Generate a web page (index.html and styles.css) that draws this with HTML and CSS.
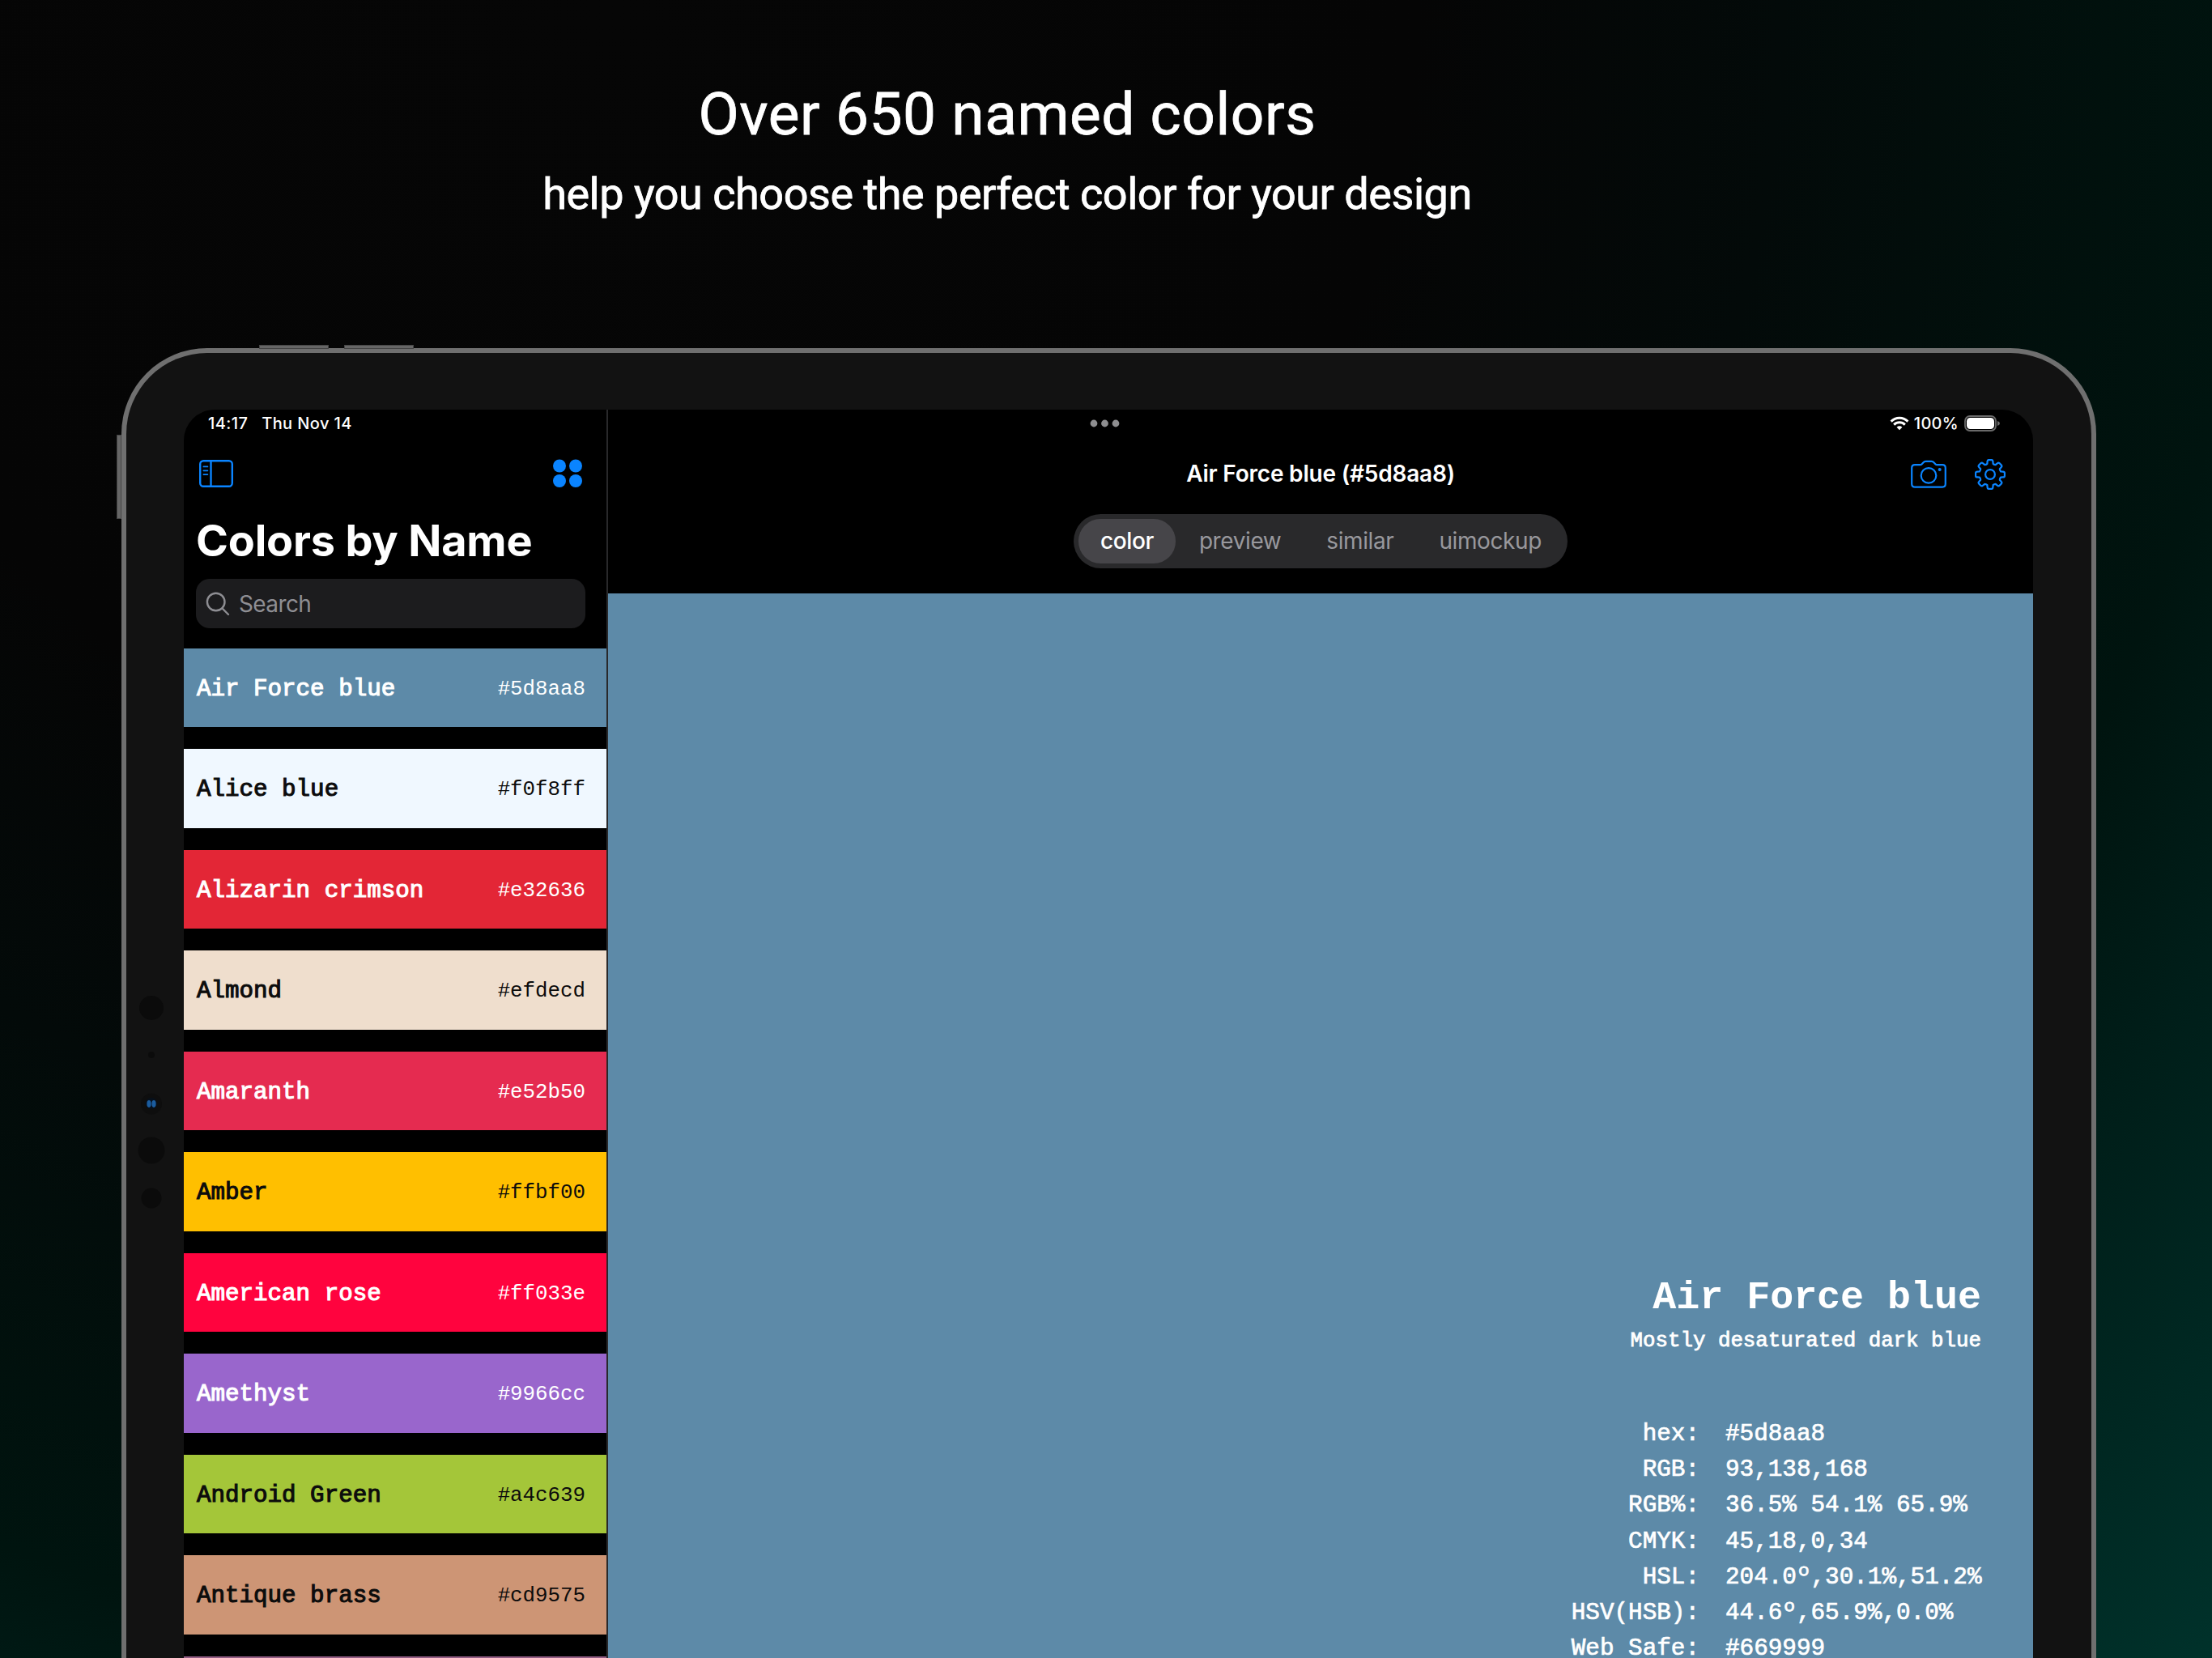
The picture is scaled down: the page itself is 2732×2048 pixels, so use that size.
FILE: index.html
```html
<!DOCTYPE html>
<html lang="en">
<head>
  <meta charset="UTF-8" />
  <title>Colors by Name</title>
  <link rel="stylesheet" href="styles.css">
</head>
<body>
  <div class="headline">
    <h1>Over 650 named colors</h1>
    <p>help you choose the perfect color for your design</p>
  </div>

  <div class="device">
    <span class="hw hw-top1"></span>
    <span class="hw hw-top2"></span>
    <span class="hw hw-side"></span>
    <svg class="sensors" width="40" height="280" viewBox="0 0 40 280">
      <g fill="#0b0b0b">
        <circle cx="20" cy="15" r="15" />
        <circle cx="20" cy="73" r="4" />
        <circle cx="20" cy="133.5" r="13" fill="#0e0e0e" />
        <circle cx="20" cy="191" r="16.5" />
        <circle cx="20" cy="250" r="12.5" />
      </g>
      <circle cx="20" cy="133" r="7" fill="#06101c" />
      <ellipse cx="17" cy="133.5" rx="2.6" ry="4.4" fill="#1b5c9e" />
      <ellipse cx="23" cy="133.5" rx="2.6" ry="4.4" fill="#1b5c9e" />
    </svg>

    <div class="screen">
      <div class="sidebar">
        <div class="status"><span>14:17</span><span>Thu Nov 14</span></div>
        <div class="side-tools">
          <svg width="44" height="36" viewBox="0 0 44 36" fill="none" stroke="#0a84ff" stroke-width="2.4">
            <rect x="2.2" y="2.2" width="39.6" height="31.6" rx="4" />
            <path d="M15.5 2.500v31" />
            <path d="M6.4 9.4h5M6.4 14.3h5M6.4 19.1h5" stroke-width="1.8" stroke-linecap="round" />
          </svg>
          <svg width="36" height="36" viewBox="0 0 36 36" fill="#0a84ff">
            <circle cx="8" cy="8.5" r="8" /><circle cx="28" cy="8.5" r="8" />
            <circle cx="8" cy="27" r="8" /><circle cx="28" cy="27" r="8" />
          </svg>
        </div>
        <h2>Colors by Name</h2>
        <div class="search">
          <svg width="30" height="30" viewBox="0 0 30 30" fill="none" stroke="#8e8e93" stroke-width="2.4" stroke-linecap="round">
            <circle cx="12.7" cy="12.5" r="10.8" />
            <path d="M20.6 20.5l7.4 7.5" />
          </svg>
          <span>Search</span>
        </div>
        <div class="list">
          <div class="row air"><b>Air Force blue</b><span>#5d8aa8</span></div>
          <div class="row alice dark"><b>Alice blue</b><span>#f0f8ff</span></div>
          <div class="row alizarin"><b>Alizarin crimson</b><span>#e32636</span></div>
          <div class="row almond dark"><b>Almond</b><span>#efdecd</span></div>
          <div class="row amaranth"><b>Amaranth</b><span>#e52b50</span></div>
          <div class="row amber dark"><b>Amber</b><span>#ffbf00</span></div>
          <div class="row rose"><b>American rose</b><span>#ff033e</span></div>
          <div class="row amethyst"><b>Amethyst</b><span>#9966cc</span></div>
          <div class="row android dark"><b>Android Green</b><span>#a4c639</span></div>
          <div class="row brass dark"><b>Antique brass</b><span>#cd9575</span></div>
          <div class="row fuchsia"></div>
        </div>
      </div>

      <div class="main">
        <div class="status-right">
          <svg class="dots" width="38" height="10" viewBox="0 0 38 10" fill="#8e8e90">
            <circle cx="5" cy="5" r="4.4" /><circle cx="18.5" cy="5" r="4.4" /><circle cx="32" cy="5" r="4.4" />
          </svg>
          <svg width="24" height="18" viewBox="0 0 24 18" fill="none" stroke="#fff" stroke-width="3">
            <path d="M1.6 6.6a14.8 14.8 0 0 1 20.8 0" />
            <path d="M5.2 10.6a9.6 9.6 0 0 1 13.6 0" />
            <path d="M12 17.2l-3.4-3.5a4.8 4.8 0 0 1 6.8 0z" fill="#fff" stroke="none" />
          </svg>
          <span class="percent">100%</span>
          <svg width="45" height="20" viewBox="0 0 45 20">
            <rect x="1" y="1" width="38" height="18" rx="6" fill="none" stroke="#6a6a6a" stroke-width="1.8" />
            <rect x="3" y="3" width="34" height="14" rx="4.4" fill="#fff" />
            <path d="M41 7v6q3-1 3-3t-3-3z" fill="#6a6a6a" />
          </svg>
        </div>
        <div class="nav">
          <h3>Air Force blue (#5d8aa8)</h3>
          <div class="nav-icons">
            <svg width="44" height="36" viewBox="0 0 44 36" fill="none" stroke="#0a84ff" stroke-width="2.2" stroke-linejoin="round">
              <path d="M5 6.2h6.5q1.3 0 2.2-1l1.8-2q1.2-1.4 3-1.4h7q1.8 0 3 1.4l1.8 2q.9 1 2.2 1H39q3.8 0 3.8 3.8v19.8q0 3.8-3.8 3.8H5q-3.8 0-3.8-3.8V10Q1.2 6.2 5 6.2z" />
              <circle cx="22" cy="19.4" r="9.3" />
              <circle cx="35.7" cy="12" r="2" fill="#0a84ff" stroke="none" />
            </svg>
            <svg id="gear" width="40" height="40" viewBox="-20 -20 40 40" fill="none" stroke="#0a84ff" stroke-width="2.2" stroke-linejoin="round">
              <path />
              <circle r="5.9" />
            </svg>
          </div>
        </div>
        <div class="tabs">
          <span class="tab active">color</span>
          <span class="tab">preview</span>
          <span class="tab">similar</span>
          <span class="tab">uimockup</span>
        </div>
        <div class="swatch">
          <h4>Air Force blue</h4>
          <p>Mostly desaturated dark blue</p>
          <dl>
            <dt>hex:</dt><dd>#5d8aa8</dd>
            <dt>RGB:</dt><dd>93,138,168</dd>
            <dt>RGB%:</dt><dd>36.5% 54.1% 65.9%</dd>
            <dt>CMYK:</dt><dd>45,18,0,34</dd>
            <dt>HSL:</dt><dd>204.0º,30.1%,51.2%</dd>
            <dt>HSV(HSB):</dt><dd>44.6º,65.9%,0.0%</dd>
            <dt>Web Safe:</dt><dd>#669999</dd>
          </dl>
        </div>
      </div>
    </div>
  </div>

  <script>
    // eight-tooth gear outline with rounded teeth
    let d = "";
    for (let i = 0; i < 8; i++) {
      const a = i * Math.PI / 4 - Math.PI / 2;
      const pt = (r, off) => (r * Math.cos(a + off)).toFixed(2) + " " + (r * Math.sin(a + off)).toFixed(2);
      d += (i ? "L" : "M") + pt(13.6, -0.27) + "L" + pt(16.2, -0.21) + "Q" + pt(18.1, -0.19) + " " + pt(18, -0.1);
      d += "L" + pt(18, 0.1) + "Q" + pt(18.1, 0.19) + " " + pt(16.2, 0.21) + "L" + pt(13.6, 0.27);
      d += "Q" + pt(12.8, 0.3927) + " " + pt(13.6, 0.5154);
    }
    document.querySelector("#gear path").setAttribute("d", d + "Z");
  </script>
</body>
</html>
```
FILE: styles.css
```css
* {
  box-sizing: border-box;
}

body {
  margin: 0;
  width: 2732px;
  height: 2048px;
  overflow: hidden;
  background: radial-gradient(circle at 750px 0, #060606 0, #050505 1000px, #030a09 1450px, #00140f 2050px, #001e19 2300px, #00322b 2860px);
  color: #fff;
  font-family: Inter, "Liberation Sans", sans-serif;
}

h1, h2, h3, h4, p, dl, dd {
  margin: 0;
}

.headline {
  width: 2488px;
  height: 430px;
  padding-top: 98px;
  text-align: center;
  font-family: Roboto, sans-serif;
}

.headline h1 {
  font-size: 73px;
  line-height: 86px;
  font-weight: 400;
  letter-spacing: 0.55px;
  -webkit-text-stroke: 0.8px #fff;
}

.headline p {
  margin-top: 23px;
  font-size: 54px;
  line-height: 66px;
  letter-spacing: -0.47px;
  -webkit-text-stroke: 0.8px #fff;
}

.device {
  position: relative;
  width: 2439px;
  height: 1618px;
  margin-left: 150px;
  padding: 70px 72px 0 71px;
  border: 6px solid #6f6f6f;
  border-bottom: 0;
  border-radius: 106px 106px 0 0;
  background: #121212;
}

.hw {
  position: absolute;
  background: #666;
  border: 1px solid #444;
}

.hw-top1, .hw-top2 {
  top: -10px;
  width: 86px;
  height: 5px;
}

.hw-top1 {
  left: 164px;
}

.hw-top2 {
  left: 269px;
}

.hw-side {
  left: -12px;
  top: 101px;
  width: 6px;
  height: 104px;
}

.sensors {
  position: absolute;
  left: 11px;
  top: 794px;
}

.screen {
  display: flex;
  height: 1542px;
  border-radius: 38px 38px 0 0;
  background: #000;
  overflow: hidden;
}

.sidebar {
  width: 524px;
  border-right: 2px solid #29292b;
}

.status {
  display: flex;
  gap: 17px;
  height: 58px;
  padding: 4px 0 0 30px;
  font-size: 20px;
  line-height: 26px;
  font-weight: 500;
  letter-spacing: 0.4px;
}

.side-tools {
  display: flex;
  justify-content: space-between;
  height: 74px;
  padding: 3px 30px 0 18px;
}

.sidebar h2 {
  height: 77px;
  padding-left: 15px;
  font-size: 54px;
  line-height: 59px;
  font-weight: 700;
  letter-spacing: -0.2px;
}

.search {
  display: flex;
  align-items: center;
  gap: 11px;
  width: 481px;
  height: 61px;
  margin-left: 15px;
  padding-left: 12px;
  border-radius: 17px;
  background: #1c1c1e;
  color: #8e8e93;
  font-size: 28px;
  letter-spacing: -0.6px;
}

.list {
  display: flex;
  flex-direction: column;
  gap: 27px;
  margin-top: 24.5px;
}

.row {
  display: flex;
  justify-content: space-between;
  flex: none;
  height: 97.5px;
  padding: 0 26px 0 16px;
  font-family: "Liberation Mono", monospace;
  line-height: 98px;
  color: #fff;
}

.row b {
  padding-top: 2px;
  font-size: 29.2px;
  font-weight: 400;
  -webkit-text-stroke: 1.1px;
}

.row span {
  padding-top: 2px;
  font-size: 25.8px;
}

.row.dark {
  color: #0c0c0c;
}

.air { background: #5d8aa8; }
.alice { background: #f0f8ff; }
.alizarin { background: #e32636; }
.almond { background: #efdecd; }
.amaranth { background: #e52b50; }
.amber { background: #ffbf00; }
.rose { background: #ff033e; }
.amethyst { background: #9966cc; }
.android { background: #a4c639; }
.brass { background: #cd9575; }
.fuchsia { background: #915c83; }

.main {
  display: flex;
  flex-direction: column;
  flex: 1;
}

.status-right {
  display: flex;
  align-items: center;
  height: 34px;
  padding: 0 40px 0 595px;
}

.dots {
  margin-right: auto;
}

.percent {
  margin: 0 7px 0 6px;
  font-size: 20px;
  font-weight: 500;
  letter-spacing: 0.3px;
}

.nav {
  position: relative;
  height: 96px;
  padding-top: 27px;
  text-align: center;
}

.nav h3 {
  font-size: 28px;
  line-height: 37px;
  font-weight: 600;
  letter-spacing: -0.2px;
}

.nav-icons {
  position: absolute;
  right: 33px;
  top: 26px;
  display: flex;
  align-items: center;
  gap: 34px;
}

.tabs {
  display: flex;
  align-self: center;
  gap: 2px;
  width: 610px;
  height: 67px;
  padding: 6px;
  border-radius: 34px;
  background: #29292b;
  font-size: 28px;
  line-height: 55px;
  letter-spacing: -0.4px;
}

.tab {
  padding: 0 27px;
  color: #98989d;
}

.active {
  border-radius: 27px;
  background: #464549;
  color: #fff;
  font-weight: 500;
}

.swatch {
  flex: 1;
  margin-top: 31px;
  padding: 841px 64px 0 0;
  background: #5d8aa8;
  font-family: "Liberation Mono", monospace;
  text-align: right;
}

.swatch h4 {
  font-size: 48.3px;
  line-height: 60px;
}

.swatch p {
  font-size: 25.8px;
  line-height: 46px;
  -webkit-text-stroke: 0.8px #fff;
}

.swatch dl {
  display: grid;
  grid-template-columns: auto 316px;
  column-gap: 32px;
  justify-content: end;
  height: 298px;
  margin-top: 70px;
  font-size: 29.3px;
  line-height: 44.2px;
  -webkit-text-stroke: 0.7px #fff;
}

.swatch dd {
  text-align: left;
}
```
